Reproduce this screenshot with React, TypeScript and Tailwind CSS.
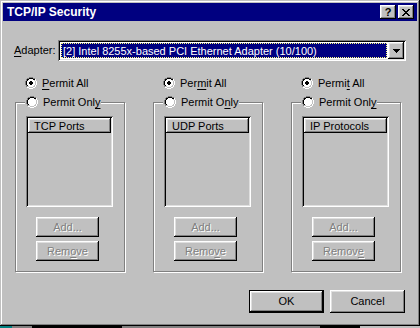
import React from 'react'

const raised =
  'shadow-[inset_-1px_-1px_#000,inset_1px_1px_#fff,inset_-2px_-2px_#808080,inset_2px_2px_#dfdfdf]'
const sunken =
  'shadow-[inset_1px_1px_#808080,inset_-1px_-1px_#fff,inset_2px_2px_#000,inset_-2px_-2px_#dfdfdf]'

// classic 12x12 radio, one char per pixel
const radioRows = [
  '....DDDD....',
  '..DDBBBBDD..',
  '.DBBWWWWBBH.',
  '.DBWWWWWWLH.',
  'DBWWWWWWWWLH',
  'DBWWWWWWWWLH',
  'DBWWWWWWWWLH',
  'DBWWWWWWWWLH',
  '.DBWWWWWWLH.',
  '.DLLWWWWLLH.',
  '..HHLLLLHH..',
  '....HHHH....',
]
const dotRows = ['.KK.', 'KKKK', 'KKKK', '.KK.']
const px: Record<string, string> = { D: '#808080', B: '#000', W: '#fff', L: '#c0c0c0', H: '#fff', K: '#000' }

function Radio({ checked }: { checked?: boolean }) {
  return (
    <svg width="12" height="12" viewBox="0 0 12 12" shapeRendering="crispEdges" className="shrink-0">
      {radioRows.flatMap((row, y) =>
        row.split('').map((c, x) => (c === '.' ? null : <rect key={`${x}-${y}`} x={x} y={y} width="1" height="1" fill={px[c]} />))
      )}
      {checked &&
        dotRows.flatMap((row, y) =>
          row.split('').map((c, x) => (c === '.' ? null : <rect key={`d${x}-${y}`} x={x + 4} y={y + 4} width="1" height="1" fill="#000" />))
        )}
    </svg>
  )
}

function Key({ children }: { children: React.ReactNode }) {
  return <span className="underline underline-offset-[2px]">{children}</span>
}

function Btn({ children, disabled, def, w = 'w-[63px]', h = 'h-[20px]' }: { children: React.ReactNode; disabled?: boolean; def?: boolean; w?: string; h?: string }) {
  return (
    <div className={`${w} ${h} ${def ? 'border border-black' : ''}`}>
      <div
        className={`w-full h-full flex items-center justify-center bg-[#c0c0c0] ${raised} ${
          disabled ? 'text-[#808080] [text-shadow:1px_1px_0_#fff]' : 'text-black'
        }`}
      >
        {children}
      </div>
    </div>
  )
}

type Col = { all: React.ReactNode; only: React.ReactNode; list: string; remove: React.ReactNode }

const cols: Col[] = [
  {
    all: <><Key>P</Key>ermit All</>,
    only: <>Permit Onl<Key>y</Key></>,
    list: 'TCP Ports',
    remove: <>Rem<Key>o</Key>ve</>,
  },
  {
    all: <>Per<Key>m</Key>it All</>,
    only: <>Permit O<Key>n</Key>ly</>,
    list: 'UDP Ports',
    remove: <>Remo<Key>v</Key>e</>,
  },
  {
    all: <>Permi<Key>t</Key> All</>,
    only: <>Permit Onl<Key>y</Key></>,
    list: 'IP Protocols',
    remove: <>Remov<Key>e</Key></>,
  },
]

function Column({ col }: { col: Col }) {
  return (
    <div className="w-[110px] flex flex-col">
      <div className="h-[12px] pl-[10px] flex items-center gap-[5px]">
        <Radio checked />
        <span className="leading-[12px]">{col.all}</span>
      </div>
      <div className="relative mt-[13px] h-[170px] border border-[#808080] shadow-[inset_1px_1px_#fff,1px_1px_#fff] pt-[13px] pl-[10px]">
        <div className="absolute -top-[7px] left-[9px] bg-[#c0c0c0] pl-[1px] pr-[1px] h-[12px] flex items-center gap-[5px]">
          <Radio />
          <span className="leading-[12px]">{col.only}</span>
        </div>
        <div className={`w-[87px] h-[91px] p-[2px] ${sunken}`}>
          <div className={`h-[15px] flex items-center pl-[6px] leading-[12px] ${raised}`}>{col.list}</div>
        </div>
        <div className="ml-[10px] mt-[10px] flex flex-col gap-[4px]">
          <Btn disabled>Add...</Btn>
          <Btn disabled>{col.remove}</Btn>
        </div>
      </div>
    </div>
  )
}

export default function App() {
  return (
    <div className="w-[420px] h-[328px] bg-[#c0c0c0] font-['Liberation_Sans',Arial,sans-serif] text-[11px] text-black overflow-hidden">
      <div className="h-[326px] p-[3px] flex flex-col shadow-[inset_-1px_-1px_#000,inset_1px_1px_#c0c0c0,inset_-2px_-2px_#808080,inset_2px_2px_#fff]">
        {/* title bar */}
        <div className="h-[18px] bg-[#000080] flex items-center justify-between pl-[4px] pr-[3px]">
          <span className="text-white font-bold text-[12px] leading-[14px]">TCP/IP Security</span>
          <div className="flex gap-[2px]">
            <div className={`w-[16px] h-[14px] bg-[#c0c0c0] flex items-center justify-center ${raised}`}>
              <span className="font-bold text-[11px] leading-[10px] text-black">?</span>
            </div>
            <div className={`w-[16px] h-[14px] bg-[#c0c0c0] flex items-center justify-center ${raised}`}>
              <svg width="8" height="7" viewBox="0 0 8 7" shapeRendering="crispEdges">
                <path d="M0 0h2v1h-2zM6 0h2v1h-2zM1 1h2v1h-2zM5 1h2v1h-2zM2 2h4v1h-4zM3 3h2v1h-2zM2 4h4v1h-4zM1 5h2v1h-2zM5 5h2v1h-2zM0 6h2v1h-2zM6 6h2v1h-2z" fill="#000" />
              </svg>
            </div>
          </div>
        </div>

        {/* adapter row */}
        <div className="mt-[19px] pl-[11px] flex items-center">
          <span className="w-[44px]"><Key>A</Key>dapter:</span>
          <div className={`w-[348px] h-[21px] p-[2px] flex ${sunken} bg-white`}>
            <div className="flex-1 m-[1px] bg-[#000080] border border-dotted border-[#ffff80] flex items-center pl-[1px] text-white leading-[12px] whitespace-nowrap overflow-hidden">
              [2] Intel 8255x-based PCI Ethernet Adapter (10/100)
            </div>
            <div className={`w-[16px] h-full bg-[#c0c0c0] flex items-center justify-center ${raised}`}>
              <svg width="7" height="4" viewBox="0 0 7 4" shapeRendering="crispEdges">
                <path d="M0 0h7v1h-7zM1 1h5v1h-5zM2 2h3v1h-3zM3 3h1v1h-1z" fill="#000" />
              </svg>
            </div>
          </div>
        </div>

        {/* permit columns */}
        <div className="mt-[16px] pl-[12px] flex gap-[28px]">
          {cols.map((c, i) => (
            <Column key={i} col={c} />
          ))}
        </div>

        {/* dialog buttons */}
        <div className="mt-[18px] pr-[12px] flex justify-end gap-[6px]">
          <Btn def w="w-[75px]" h="h-[23px]">OK</Btn>
          <Btn w="w-[75px]" h="h-[23px]">Cancel</Btn>
        </div>
      </div>
      {/* strip of the desktop below the window */}
      <div className="h-[2px] flex">
        <div className="w-[12px] bg-[#008080]" />
        <div className="w-[20px] bg-[#808080]" />
        <div className="w-[90px] bg-black" />
        <div className="flex-1 bg-[#808080]" />
        <div className="w-[40px] bg-black" />
        <div className="w-[60px] bg-[#c0c0c0]" />
      </div>
    </div>
  )
}
